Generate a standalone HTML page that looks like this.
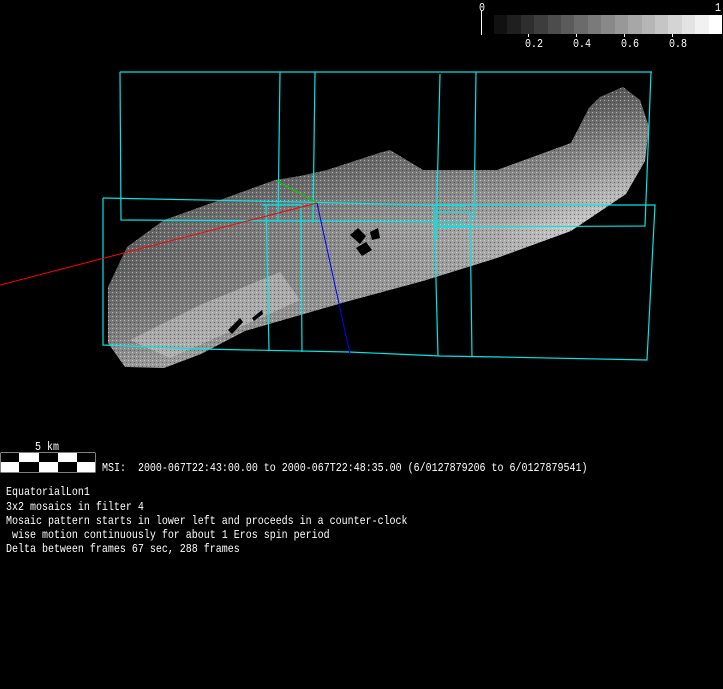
<!DOCTYPE html>
<html><head><meta charset="utf-8"><style>
html,body{margin:0;padding:0;background:#000;width:723px;height:689px;overflow:hidden}
svg{position:absolute;left:0;top:0}
.t{font-family:"Liberation Mono","DejaVu Sans Mono",monospace;font-size:12px;fill:#fff}
</style></head><body>
<svg width="723" height="689" viewBox="0 0 723 689" xmlns="http://www.w3.org/2000/svg">
<defs>
<linearGradient id="g" x1="0" y1="0" x2="1" y2="0.4">
<stop offset="0" stop-color="#3c3c3c"/>
<stop offset="0.3" stop-color="#6e6e6e"/>
<stop offset="0.55" stop-color="#8e8e8e"/>
<stop offset="0.8" stop-color="#aaaaaa"/>
<stop offset="1" stop-color="#dddddd"/>
</linearGradient>
<linearGradient id="g2" x1="0" y1="0" x2="0" y2="1">
<stop offset="0" stop-color="#000" stop-opacity="0.5"/>
<stop offset="0.5" stop-color="#000" stop-opacity="0"/>
<stop offset="1" stop-color="#fff" stop-opacity="0.25"/>
</linearGradient>
<pattern id="dots" width="4" height="4" patternUnits="userSpaceOnUse">
<rect x="0" y="0" width="1" height="1" fill="#fff" opacity="0.5"/>
<rect x="2" y="2" width="1" height="1" fill="#000" opacity="0.4"/>
</pattern>
</defs>
<rect width="723" height="689" fill="#000"/>
<!-- colorbar -->
<g>
<rect x="494" y="15" width="14" height="19" fill="#111"/>
<rect x="507" y="15" width="14" height="19" fill="#1f1f1f"/>
<rect x="521" y="15" width="14" height="19" fill="#2e2e2e"/>
<rect x="534" y="15" width="14" height="19" fill="#3d3d3d"/>
<rect x="548" y="15" width="14" height="19" fill="#4c4c4c"/>
<rect x="561" y="15" width="14" height="19" fill="#5b5b5b"/>
<rect x="574" y="15" width="14" height="19" fill="#6b6b6b"/>
<rect x="588" y="15" width="14" height="19" fill="#7a7a7a"/>
<rect x="601" y="15" width="14" height="19" fill="#898989"/>
<rect x="615" y="15" width="14" height="19" fill="#989898"/>
<rect x="628" y="15" width="14" height="19" fill="#a7a7a7"/>
<rect x="642" y="15" width="14" height="19" fill="#b6b6b6"/>
<rect x="655" y="15" width="14" height="19" fill="#c5c5c5"/>
<rect x="668" y="15" width="14" height="19" fill="#d4d4d4"/>
<rect x="682" y="15" width="14" height="19" fill="#e3e3e3"/>
<rect x="695" y="15" width="14" height="19" fill="#f1f1f1"/>
<rect x="709" y="15" width="13" height="19" fill="#fff"/>
<line x1="481.5" y1="11" x2="481.5" y2="35" stroke="#fff"/>
<line x1="528.5" y1="34" x2="528.5" y2="37" stroke="#fff"/>
<line x1="576.5" y1="34" x2="576.5" y2="37" stroke="#fff"/>
<line x1="624.5" y1="34" x2="624.5" y2="37" stroke="#fff"/>
<line x1="672.5" y1="34" x2="672.5" y2="37" stroke="#fff"/>
</g>
<!-- asteroid -->
<path id="ast" d="M125,367 L164,368 L201,354 L245,331 L349,301 L423,281 L497,258 L571,231 L626,194 L645,161 L649,127 L640,100 L623,87 L600,97 L589,108 L571,143 L497,170 L423,170 L390,150 L379,153 L327,170 L300,176 L275,180 L220,200 L164,220 L127,247 L108,287 L108,343 Z" fill="url(#g)"/>
<path d="M125,367 L164,368 L201,354 L245,331 L349,301 L423,281 L497,258 L571,231 L626,194 L645,161 L649,127 L640,100 L623,87 L600,97 L589,108 L571,143 L497,170 L423,170 L390,150 L379,153 L327,170 L300,176 L275,180 L220,200 L164,220 L127,247 L108,287 L108,343 Z" fill="url(#g2)"/>
<path d="M130,340 L200,305 L280,272 L300,300 L245,325 L170,358 Z" fill="#c8c8c8" opacity="0.5"/>
<path d="M125,367 L164,368 L201,354 L245,331 L349,301 L423,281 L497,258 L571,231 L626,194 L645,161 L649,127 L640,100 L623,87 L600,97 L589,108 L571,143 L497,170 L423,170 L390,150 L379,153 L327,170 L300,176 L275,180 L220,200 L164,220 L127,247 L108,287 L108,343 Z" fill="url(#dots)"/>
<path d="M350,235 L358,228 L366,236 L360,244 Z M356,248 L366,242 L372,250 L362,256 Z M370,232 L378,228 L380,238 L372,240 Z" fill="#000"/>
<path d="M228,330 L240,318 L243,322 L232,334 Z M252,318 L262,310 L263,314 L254,321 Z" fill="#000"/>
<!-- cyan frames -->
<g fill="none" stroke="#00e5e5" stroke-width="1.2">
<polyline points="120,72 652,72"/>
<polyline points="120,72 121,220 465,222"/>
<polyline points="280,72 278,222"/>
<polyline points="315,72 313,222"/>
<polyline points="440,74 436,240"/>
<polyline points="476,72 474,222"/>
<polyline points="651,72 645,226 440,227"/>
<polyline points="103,198 103,345 200,349 349,352 440,356 500,357 647,360 655,205 435,205"/>
<polyline points="103,198 300,202 465,206"/>
<polyline points="266,205 269,350"/>
<polyline points="262,205 301,205 302,352"/>
<polyline points="434,205 438,356"/>
<polyline points="435,212 470,212 472,357"/>
<polyline points="434,226 470,226"/>
</g>
<!-- axes -->
<line x1="0" y1="285" x2="317" y2="203" stroke="#f00" stroke-width="1"/>
<line x1="277" y1="181" x2="317" y2="203" stroke="#0c0" stroke-width="1"/>
<line x1="317" y1="203" x2="350" y2="354" stroke="#00f" stroke-width="1"/>
<!-- scale bar -->
<rect x="0.5" y="452.5" width="95" height="20" fill="#fff"/>
<g fill="#000">
<rect x="1" y="453" width="18" height="9"/>
<rect x="39" y="453" width="19" height="9"/>
<rect x="77" y="453" width="18" height="9"/>
<rect x="19" y="462" width="20" height="10"/>
<rect x="58" y="462" width="19" height="10"/>
</g>
<g transform="scale(0.8333,1)">
<text class="t" x="574.8" y="11">0</text>
<text class="t" x="858" y="11">1</text>
<text class="t" x="630" y="47">0.2</text>
<text class="t" x="687.6" y="47">0.4</text>
<text class="t" x="745.2" y="47">0.6</text>
<text class="t" x="802.8" y="47">0.8</text>
<text class="t" x="42" y="450">5 km</text>
<text class="t" x="122.4" y="471" xml:space="preserve">MSI:  2000-067T22:43:00.00 to 2000-067T22:48:35.00 (6/0127879206 to 6/0127879541)</text>
<text class="t" x="7.2" y="495">EquatorialLon1</text>
<text class="t" x="7.2" y="510">3x2 mosaics in filter 4</text>
<text class="t" x="7.2" y="524">Mosaic pattern starts in lower left and proceeds in a counter-clock</text>
<text class="t" x="7.2" y="538" xml:space="preserve"> wise motion continuously for about 1 Eros spin period</text>
<text class="t" x="7.2" y="552">Delta between frames 67 sec, 288 frames</text>
</g>
</svg>
</body></html>
